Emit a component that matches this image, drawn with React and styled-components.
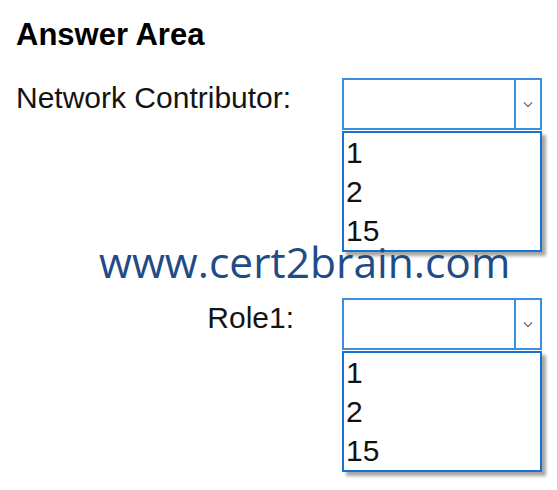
import React from "react";
import styled, { createGlobalStyle } from "styled-components";

const GlobalStyle = createGlobalStyle`
  html, body {
    margin: 0;
    padding: 0;
    background: #ffffff;
  }
  * {
    box-sizing: border-box;
  }
`;

const Page = styled.div`
  position: relative;
  width: 557px;
  height: 490px;
  padding-top: 18px;
  font-family: "Liberation Sans", Arial, sans-serif;
  color: #111111;
  overflow: hidden;
`;

const Title = styled.h1`
  margin: 0 0 26px 0;
  padding-left: 16px;
  font-size: 31px;
  line-height: 34px;
  font-weight: 700;
  color: #000000;
`;

const Rows = styled.div`
  display: flex;
  flex-direction: column;
  gap: 46px;
`;

const Row = styled.div`
  display: grid;
  grid-template-columns: 326px 200px;
  padding-left: 16px;
  align-items: start;
`;

const Label = styled.div`
  margin-top: 3px;
  font-size: 30px;
  line-height: 34px;
  justify-self: ${(p) => (p.$end ? "end" : "start")};
  margin-right: ${(p) => (p.$end ? "48px" : "0")};
  color: #141414;
`;

const Dropdown = styled.div`
  display: flex;
  flex-direction: column;
  width: 200px;
`;

const SelectBox = styled.div`
  display: flex;
  height: 52px;
  border: 2px solid #3b8ee0;
  background: #ffffff;
`;

const SelectValue = styled.div`
  flex: 1;
`;

const Toggle = styled.div`
  width: 26px;
  border-left: 2px solid #3b8ee0;
  display: flex;
  align-items: center;
  justify-content: center;
`;

const OptionList = styled.ul`
  list-style: none;
  margin: 1px 0 0 0;
  padding: 0;
  border: 2px solid #1872d0;
  background: #ffffff;
  box-shadow: 4px 4px 3px rgba(0, 0, 0, 0.35);
`;

const Option = styled.li`
  padding-left: 2px;
  font-size: 30px;
  line-height: 39px;
  color: #111111;
`;

/* site stamp laid over the form */
const Watermark = styled.div`
  position: absolute;
  left: 99px;
  top: 248px;
  font-family: "Open Sans", "DejaVu Sans", sans-serif;
  font-size: 42.5px;
  line-height: 28px;
  color: #1f4b86;
  white-space: nowrap;
  z-index: 2;
`;

const Chevron = () => (
  <svg width="10" height="7" viewBox="0 0 10 7" aria-hidden="true">
    <path d="M1 1.5 L5 5.5 L9 1.5" fill="none" stroke="#707070" strokeWidth="1.3" />
  </svg>
);

const options = ["1", "2", "15"];

const Select = () => (
  <Dropdown>
    <SelectBox>
      <SelectValue />
      <Toggle>
        <Chevron />
      </Toggle>
    </SelectBox>
    <OptionList>
      {options.map((o) => (
        <Option key={o}>{o}</Option>
      ))}
    </OptionList>
  </Dropdown>
);

export default function App() {
  return (
    <>
      <GlobalStyle />
      <Page>
        <Title>Answer Area</Title>
        <Rows>
          <Row>
            <Label>Network Contributor:</Label>
            <Select />
          </Row>
          <Row>
            <Label $end>Role1:</Label>
            <Select />
          </Row>
        </Rows>
        <Watermark>www.cert2brain.com</Watermark>
      </Page>
    </>
  );
}
